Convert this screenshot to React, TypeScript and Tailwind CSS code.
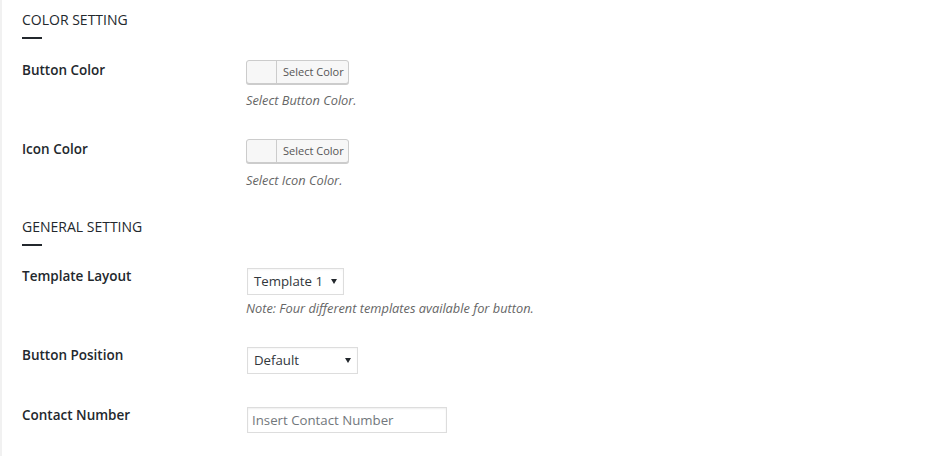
import React from 'react';

const font = { fontFamily: '"Open Sans", "Noto Sans", Arial, sans-serif' };

const SectionTitle = ({ text, className = '' }: { text: string; className?: string }) => (
    <div className={className}>
        <h2 className="text-[14px] leading-5 font-normal text-[#23282d] uppercase">{text}</h2>
        <div className="mt-[7px] h-[2px] w-5 bg-[#23282d]" />
    </div>
);

const ColorButton = () => (
    <div className="flex h-6 w-[103px] rounded-[3px] border border-[#ccc] bg-[#f7f7f7] shadow-[0_1px_0_#ccc] overflow-hidden">
        <span className="w-[30px] shrink-0 border-r border-[#ccc]" />
        <span className="pl-[6px] text-[11px] leading-[22px] text-[#555] whitespace-nowrap">Select Color</span>
    </div>
);

const FakeSelect = ({ value, width }: { value: string; width: string }) => (
    <div className={`${width} h-[27px] flex items-center justify-between border border-[#ddd] bg-white pl-[6px] pr-[6px] shadow-[inset_0_1px_2px_rgba(0,0,0,0.04)]`}>
        <span className="text-[13.25px] text-[#32373c] whitespace-nowrap">{value}</span>
        <svg width="6" height="5" viewBox="0 0 6 5" className="shrink-0"><path d="M0 0h6L3 5z" fill="#23282d" /></svg>
    </div>
);

const Label = ({ text }: { text: string }) => (
    <div className="w-[224px] shrink-0 text-[13.5px] leading-5 font-semibold text-[#23282d]">{text}</div>
);

const Desc = ({ text, className = '' }: { text: string; className?: string }) => (
    <p className={`text-[12.8px] leading-5 italic text-[#666] whitespace-nowrap ${className}`}>{text}</p>
);

export default function App() {
    return (
        <div className="min-h-screen bg-white flex" style={font}>
            <div className="w-[2px] shrink-0 bg-[#f1f1f1]" />
            <div className="pl-5 pt-[10px] flex-1">
                <SectionTitle text="Color Setting" />

                <div className="mt-[21px] flex">
                    <Label text="Button Color" />
                    <div className="flex flex-col items-start">
                        <ColorButton />
                        <Desc text="Select Button Color." className="mt-[6px]" />
                    </div>
                </div>

                <div className="mt-[29px] flex">
                    <Label text="Icon Color" />
                    <div className="flex flex-col items-start">
                        <ColorButton />
                        <Desc text="Select Icon Color." className="mt-[7px]" />
                    </div>
                </div>

                <SectionTitle text="General Setting" className="mt-[27px]" />

                <div className="mt-[20px] flex">
                    <Label text="Template Layout" />
                    <div className="flex flex-col items-start pt-[2px]">
                        <div className="pl-px">
                            <FakeSelect value="Template 1" width="w-[97px]" />
                        </div>
                        <Desc text="Note: Four different templates available for button." className="mt-[3px]" />
                    </div>
                </div>

                <div className="mt-[27px] flex">
                    <Label text="Button Position" />
                    <div className="flex flex-col items-start pt-[2px] pl-px">
                        <FakeSelect value="Default" width="w-[111px]" />
                    </div>
                </div>

                <div className="mt-[31px] flex">
                    <Label text="Contact Number" />
                    <div className="flex flex-col items-start pt-[2px] pl-px">
                        <input
                            type="text"
                            placeholder="Insert Contact Number"
                            className="block w-[200px] h-[26px] border border-[#ddd] bg-white px-[4px] text-[13.25px] text-[#32373c] placeholder:text-[#72777c] outline-none shadow-[inset_0_1px_2px_rgba(0,0,0,0.07)]"
                            style={font}
                        />
                    </div>
                </div>
            </div>
        </div>
    );
}
